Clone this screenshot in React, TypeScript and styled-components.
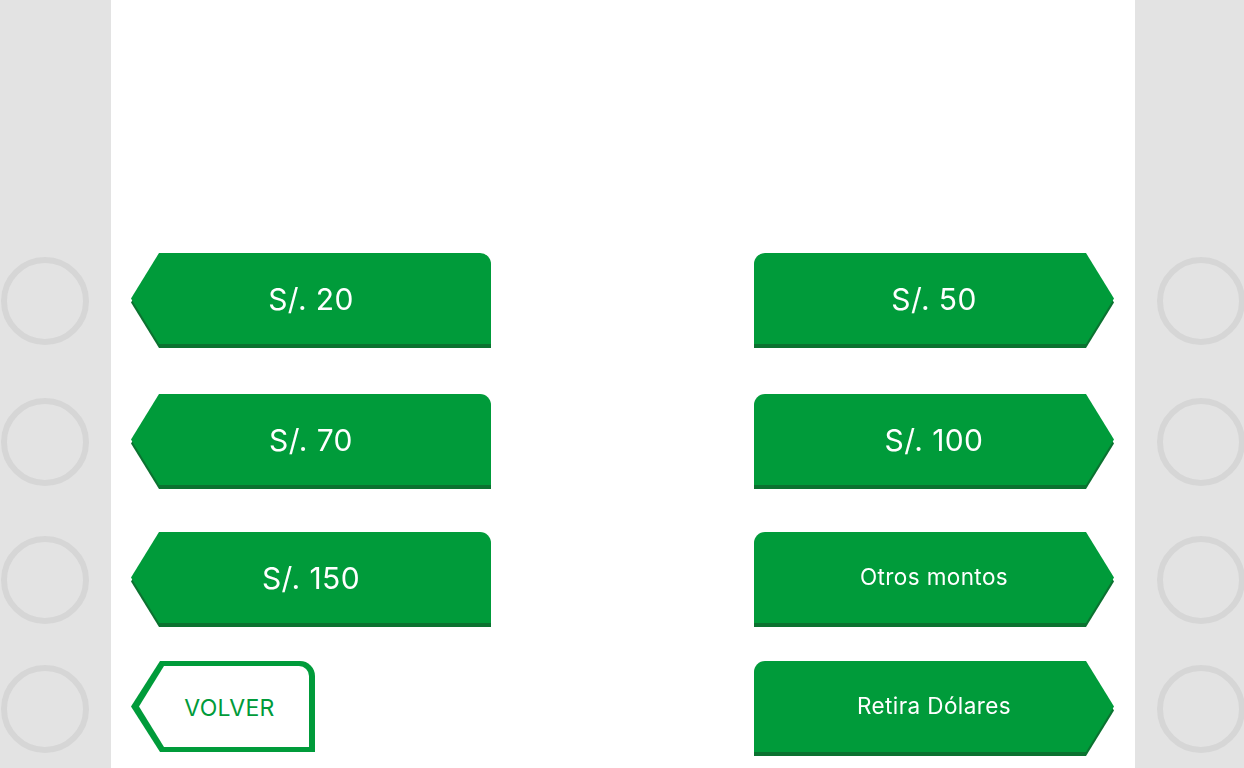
import React from "react";
import styled, { createGlobalStyle } from "styled-components";

const GlobalStyle = createGlobalStyle`
  html, body {
    margin: 0;
    padding: 0;
    background: #ffffff;
  }
  body {
    font-family: Inter, "Noto Sans", "Liberation Sans", sans-serif;
  }
`;

const GREEN = "#009b3a";
const DARK = "#0b7230";
const DEPTH = 28;

const Screen = styled.div`
  display: flex;
  width: 1244px;
  height: 768px;
  overflow: hidden;
`;

const SidePanel = styled.div<{ $width: number; $padLeft: number }>`
  width: ${(p) => p.$width}px;
  flex-shrink: 0;
  background: #e3e3e3;
  display: flex;
  flex-direction: column;
  padding-left: ${(p) => p.$padLeft}px;
  box-sizing: border-box;
`;

const Circle = styled.div<{ $top: number }>`
  width: 88px;
  height: 88px;
  box-sizing: border-box;
  border-radius: 50%;
  border: 6px solid #d6d6d6;
  margin-top: ${(p) => p.$top}px;
  flex-shrink: 0;
`;

const Main = styled.main`
  flex: 1;
  background: #ffffff;
  display: flex;
  flex-direction: column;
  padding: 253px 21px 0 20px;
  box-sizing: border-box;
`;

const Row = styled.div<{ $top: number }>`
  display: flex;
  justify-content: space-between;
  align-items: flex-start;
  margin-top: ${(p) => p.$top}px;
`;

const ShadowWrap = styled.div`
  width: 360px;
  height: 95px;
  filter: drop-shadow(0 4px 0 ${DARK});
  cursor: pointer;
`;

const leftPoly = `polygon(${DEPTH}px 0, 100% 0, 100% 100%, ${DEPTH}px 100%, 0 50%)`;
const rightPoly = `polygon(0 0, calc(100% - ${DEPTH}px) 0, 100% 50%, calc(100% - ${DEPTH}px) 100%, 0 100%)`;

const Face = styled.div<{ $side: "left" | "right"; $big: boolean }>`
  height: 91px;
  background: ${GREEN};
  clip-path: ${(p) => (p.$side === "left" ? leftPoly : rightPoly)};
  border-radius: ${(p) => (p.$side === "left" ? "0 11px 0 0" : "11px 0 0 0")};
  display: flex;
  align-items: center;
  justify-content: center;
  color: #ffffff;
  font-size: ${(p) => (p.$big ? 30 : 22.5)}px;
  font-weight: 400;
  letter-spacing: ${(p) => (p.$big ? "0.4px" : "0.4px")};
  padding-bottom: ${(p) => (p.$big ? 0 : 2)}px;
  box-sizing: border-box;
  user-select: none;
`;

const OutlineOuter = styled.div`
  width: 184px;
  height: 91px;
  background: ${GREEN};
  clip-path: polygon(29px 0, 100% 0, 100% 100%, 29px 100%, 0 50%);
  border-radius: 0 15px 0 0;
  padding: 5px 6px 5px 5px;
  box-sizing: border-box;
  display: flex;
  cursor: pointer;
`;

const OutlineInner = styled.div`
  flex: 1;
  background: #ffffff;
  clip-path: polygon(28px 0, 100% 0, 100% 100%, 28px 100%, 3px 50%);
  border-radius: 0 10px 0 0;
  display: flex;
  align-items: center;
  justify-content: center;
  padding-left: 14px;
  padding-top: 3px;
  color: ${GREEN};
  font-size: 23px;
  font-weight: 400;
  letter-spacing: 0.3px;
  user-select: none;
`;

type Btn = { label: string; big: boolean };

const AmountButton = ({ side, label, big }: Btn & { side: "left" | "right" }) => (
  <ShadowWrap>
    <Face $side={side} $big={big}>
      {label}
    </Face>
  </ShadowWrap>
);

const circleTops = [257, 53, 50, 41];

const rows: { top: number; left: Btn | null; right: Btn }[] = [
  { top: 0, left: { label: "S/. 20", big: true }, right: { label: "S/. 50", big: true } },
  { top: 46, left: { label: "S/. 70", big: true }, right: { label: "S/. 100", big: true } },
  { top: 43, left: { label: "S/. 150", big: true }, right: { label: "Otros montos", big: false } },
  { top: 34, left: null, right: { label: "Retira Dólares", big: false } },
];

export default function App() {
  return (
    <>
      <GlobalStyle />
      <Screen>
        <SidePanel $width={111} $padLeft={1}>
          {circleTops.map((t, i) => (
            <Circle key={i} $top={t} />
          ))}
        </SidePanel>
        <Main>
          {rows.map((r, i) => (
            <Row key={i} $top={r.top}>
              {r.left ? (
                <AmountButton side="left" label={r.left.label} big={r.left.big} />
              ) : (
                <OutlineOuter>
                  <OutlineInner>VOLVER</OutlineInner>
                </OutlineOuter>
              )}
              <AmountButton side="right" label={r.right.label} big={r.right.big} />
            </Row>
          ))}
        </Main>
        <SidePanel $width={109} $padLeft={22}>
          {circleTops.map((t, i) => (
            <Circle key={i} $top={t} />
          ))}
        </SidePanel>
      </Screen>
    </>
  );
}
